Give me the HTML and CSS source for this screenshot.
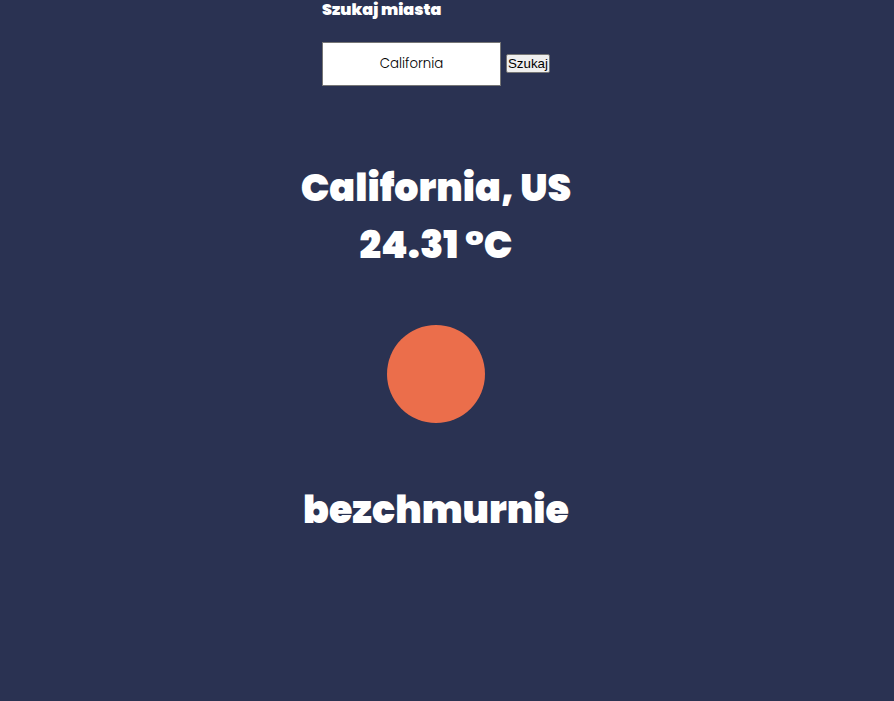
FILE: index.html
```html
<!DOCTYPE html>
<html lang="pl">
<head>
<meta charset="utf-8">
<title>Pogoda</title>
<link rel="stylesheet" href="styles.css">
</head>
<body>
<main class="app">
  <form class="search">
    <label class="search-label" for="city">Szukaj miasta</label>
    <div class="search-row">
      <input class="search-input" id="city" type="text" value="California">
      <button class="search-button" type="button">Szukaj</button>
    </div>
  </form>
  <section class="weather">
    <h1 class="weather-text">California, US</h1>
    <p class="weather-text">24.31 °C</p>
    <svg class="weather-icon" viewBox="0 0 98 98" role="img" aria-label="bezchmurnie"><circle cx="49" cy="49" r="49" fill="#eb6e4b"/></svg>
    <p class="weather-text">bezchmurnie</p>
  </section>
</main>
</body>
</html>
```

FILE: styles.css
```css
* {
  box-sizing: border-box;
}

body {
  margin: 0;
  min-height: 100vh;
  background: #2a3252;
  color: #fff;
  font-family: Poppins, Inter, "Open Sans", sans-serif;
}

.app {
  display: flex;
  flex-direction: column;
  align-items: center;
  padding-right: 22px;
}

.search-label {
  display: block;
  font-size: 16px;
  font-weight: 900;
  line-height: 20px;
}

.search-row {
  display: flex;
  align-items: baseline;
  gap: 5px;
  margin-top: 22px;
}

.search-input {
  width: 179px;
  height: 44px;
  padding: 0 10px;
  border: 1px solid #767676;
  background: #fff;
  color: #000;
  font-family: Poppins, Inter, sans-serif;
  font-weight: 300;
  text-align: center;
}

.search-button {
  width: 44px;
  height: 19px;
  padding: 0;
  border: 1px solid #767676;
  border-radius: 2px;
  background: #efefef;
  color: #000;
  font-family: "Liberation Sans", Arial, sans-serif;
}

.weather {
  display: flex;
  flex-direction: column;
  align-items: center;
  margin-top: 73px;
}

.weather-text {
  margin: 0;
  font-size: 38px;
  font-weight: 900;
  line-height: 57px;
}

.weather-icon {
  width: 98px;
  height: 98px;
  margin: 52px 0 58px;
}
```
